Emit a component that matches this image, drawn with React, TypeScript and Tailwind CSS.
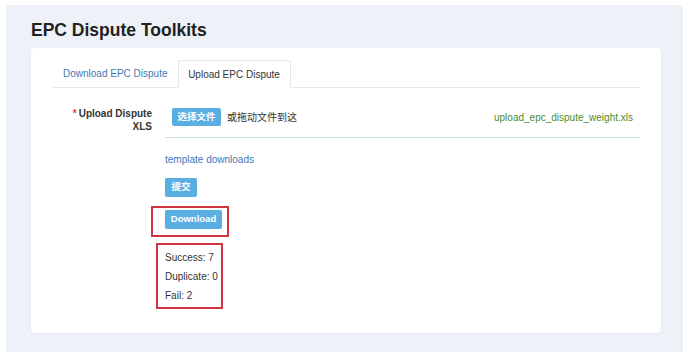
import React from 'react';

const font = { fontFamily: '"Liberation Sans", "Noto Sans CJK SC", sans-serif' };

function Tabs() {
  return (
    <div className="flex h-[28px] items-end border-b border-[#e4e7ec]">
      <div className="flex h-[27px] items-center pl-[10px] pr-[10px] text-[10px] text-[#3f78b3]">Download EPC Dispute</div>
      <div className="-mb-px flex h-[28px] w-[113px] items-center justify-center rounded-t-[3px] border border-b-white border-[#e4e7ec] bg-white text-[10px] text-[#333]">
        Upload EPC Dispute
      </div>
    </div>
  );
}

export default function App() {
  const stats = [
    { label: 'Success', value: 7 },
    { label: 'Duplicate', value: 0 },
    { label: 'Fail', value: 2 },
  ];

  return (
    <div className="h-[363px] w-[689px] bg-white pl-[6px] pt-[5px]" style={font}>
      <div className="h-[347px] w-[677px] bg-[#eef2f8] pl-[25px] pr-[22px] pt-[14px]">
        <h1 className="text-[17.5px] font-bold leading-[22px] text-[#222]">EPC Dispute Toolkits</h1>

        <div className="mt-[7px] h-[285px] w-[630px] rounded-[4px] bg-white pl-[22px] pr-[21px] pt-[12px] shadow-[0_1px_4px_rgba(0,0,0,0.04)]">
          <Tabs />

          <div className="mt-[20px] flex">
            {/* label column */}
            <div className="w-[99px] text-right text-[10px] font-bold leading-[13px] text-[#333]">
              <div className="-mt-[1px]">
                <span className="mr-[2px] text-[#e0413f]">*</span>Upload Dispute
              </div>
              <div>XLS</div>
            </div>

            <div className="ml-[13px] flex-1">
              <div className="flex items-center border-b-[1.5px] border-[#c9dde6] pb-[11px] pl-[7px] pr-[7px]">
                <button className="h-[18px] w-[49px] rounded-[2px] bg-[#5aafe2] text-[9.5px] font-bold text-white">选择文件</button>
                <span className="ml-[6px] text-[10px] text-[#333]">或拖动文件到这</span>
                <span className="ml-auto text-[10px] text-[#4d8a2c]">upload_epc_dispute_weight.xls</span>
              </div>

              <div className="mt-[15px] text-[10px] leading-[14px] text-[#3f78b3]">template downloads</div>

              <button className="mt-[11px] block h-[19px] w-[32px] rounded-[2px] bg-[#5aafe2] text-[9.5px] font-bold text-white">提交</button>

              <div className="-ml-[14px] mt-[9px] w-[78px] border-2 border-[#d1353f] pb-[6px] pl-[12px] pt-[2px]">
                <button className="block h-[19px] w-[57px] rounded-[2px] bg-[#5aafe2] text-[9.5px] font-bold text-white">Download</button>
              </div>

              <div className="-ml-[9px] mt-[6px] w-[67px] border-2 border-[#d1353f] pb-[2px] pl-[7px] pt-[3px]">
                {stats.map(s => (
                  <div key={s.label} className="text-[10px] leading-[19px] text-[#333]">
                    {s.label}: {s.value}
                  </div>
                ))}
              </div>
            </div>
          </div>
        </div>
      </div>
    </div>
  );
}
